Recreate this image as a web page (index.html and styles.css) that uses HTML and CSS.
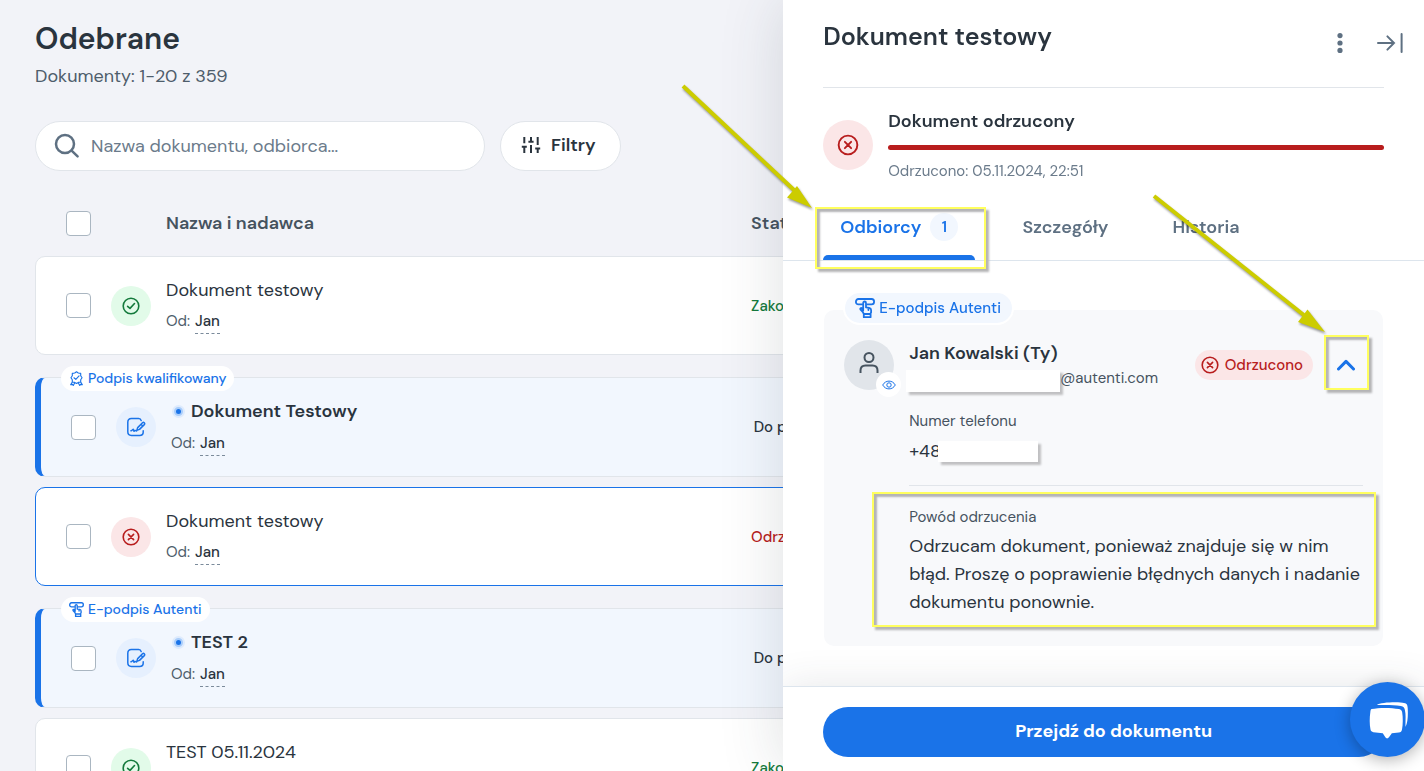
FILE: index.html
```html
<!DOCTYPE html>
<html lang="pl">
<head>
<meta charset="utf-8">
<meta name="viewport" content="width=device-width, initial-scale=1">
<title>Odebrane</title>
<link rel="stylesheet" href="styles.css">
</head>
<body>
<svg class="sprite" aria-hidden="true">
  <symbol id="i-check" viewBox="0 0 20 20"><g stroke-width="1.6"><circle cx="10" cy="10" r="7.800"/><path d="M6.6 10.300 9 12.400 13.500 7.500"/></g></symbol>
  <symbol id="i-cross" viewBox="0 0 20 20"><g stroke-width="1.6"><circle cx="10" cy="10" r="7.800"/><path d="M7.400 7.400l5.200 5.200M12.600 7.400l-5.200 5.200"/></g></symbol>
  <symbol id="i-sign" viewBox="0 0 20 20"><g stroke-width="1.5"><path d="M15.200 3.600C14.800 2.200 14 1.600 12.600 1.600H5.400C3 1.600 1.800 2.800 1.800 5.200v9.600c0 2.400 1.200 3.600 3.600 3.600h8.200c2.400 0 3.600-1.200 3.600-3.200v-1.400"/><path d="M5 13.800c1.200-.4 2-2 2.600-1.200.5.700-.3 1.600.5 1.600.6 0 .7-.8 1.300-.8.5 0 .5.6 1.200.5M10.800 13.400l.9-2.800 4.800-4.800c1.200-1.100 2.900.5 1.800 1.800l-4.800 4.800-2.700 1zM15 7.200l1.800 1.800"/></g></symbol>
  <symbol id="i-touch" viewBox="0 0 20 20"><g stroke-width="1.8"><path d="M7.200 6.400H3.400C1.900 6.400.9 5.400.9 3.900S1.900 1 3.400 1h13.200c1.500 0 2.500 1.300 2.500 2.800s-1 2.600-2.500 2.600h-4.400"/><path d="M8.200 12.400V5c0-2 2.800-2 2.800 0v4.400l3.200.5c1.300.2 1.900.9 1.900 2.100v2.400l-.8 1.600H8.800l-.9-1.800-2.300-2.600c-.9-1.200.5-2.200 1.400-1.400zM8.800 16h6.800v3.200H8.800zM13.400 10v2"/></g></symbol>
  <symbol id="i-badge" viewBox="0 0 20 20"><g stroke-width="1.5"><path d="M10 1l2.400 1.600 3.200.6V6.400L17.400 9l-1.800 2.600v3l-3.200.6L10 16.600l-2.400-1.400-3.200-.6v-3L2.600 9l1.800-2.600V3.200l3.200-.6zM6.600 9l2.500 2.200 4.300-4.600M4.400 14.600l-2.200 3.800 2.600-.5.900 1.500 2-3.600M15.600 14.600l2.200 3.800-2.600-.5-.9 1.500-2-3.600"/></g></symbol>
</svg>

<main class="inbox">
  <h1 class="inbox-title">Odebrane</h1>
  <p class="inbox-count">Dokumenty: 1-20 z 359</p>

  <div class="toolbar">
    <label class="search">
      <svg class="search-icon" viewBox="0 0 26 26" aria-hidden="true"><g stroke-width="2.500"><circle cx="11" cy="11" r="9"/><path d="M17.600 17.600l6 5.800"/></g></svg>
      <input class="search-input" type="search" placeholder="Nazwa dokumentu, odbiorca..." aria-label="Nazwa dokumentu, odbiorca">
    </label>
    <button class="filter" type="button">
      <svg class="filter-icon" viewBox="0 0 20 18" aria-hidden="true"><path d="M3.300 1v6.200M3.300 11v6M.8 10.700h5M10 1v4.500M7.400 5.700h5.200M10 9v8M16.700 1v8M16.700 13v4M14.200 12.500h5"/></svg>
      Filtry
    </button>
  </div>

  <table class="docs">
    <thead>
      <tr class="head-row">
        <th><input class="tick" type="checkbox" aria-label="Zaznacz wszystkie"></th>
        <td></td>
        <th>Nazwa i nadawca</th>
        <th>Status</th>
      </tr>
    </thead>
    <tbody>
      <tr class="doc">
        <td><input class="tick" type="checkbox" aria-label="Dokument testowy"></td>
        <td class="state state-done"><svg class="line-icon"><use href="#i-check"/></svg></td>
        <td><p class="doc-name">Dokument testowy</p><p class="doc-from">Od: <span class="sender">Jan</span></p></td>
        <td class="status status-done">Zakończony</td>
      </tr>
      <tr class="doc unread">
        <td><span class="row-tag"><svg class="line-icon"><use href="#i-badge"/></svg>Podpis kwalifikowany</span><input class="tick" type="checkbox" aria-label="Dokument Testowy"></td>
        <td class="state state-todo"><svg class="line-icon"><use href="#i-sign"/></svg></td>
        <td><p class="doc-name"><span class="dot"></span>Dokument Testowy</p><p class="doc-from">Od: <span class="sender">Jan</span></p></td>
        <td class="status">Do podpisu</td>
      </tr>
      <tr class="doc selected">
        <td><input class="tick" type="checkbox" aria-label="Dokument testowy, odrzucony"></td>
        <td class="state state-rejected"><svg class="line-icon"><use href="#i-cross"/></svg></td>
        <td><p class="doc-name">Dokument testowy</p><p class="doc-from">Od: <span class="sender">Jan</span></p></td>
        <td class="status status-rejected">Odrzucony</td>
      </tr>
      <tr class="doc unread">
        <td><span class="row-tag"><svg class="line-icon"><use href="#i-touch"/></svg>E-podpis Autenti</span><input class="tick" type="checkbox" aria-label="TEST 2"></td>
        <td class="state state-todo"><svg class="line-icon"><use href="#i-sign"/></svg></td>
        <td><p class="doc-name"><span class="dot"></span>TEST 2</p><p class="doc-from">Od: <span class="sender">Jan</span></p></td>
        <td class="status">Do podpisu</td>
      </tr>
      <tr class="doc">
        <td><input class="tick" type="checkbox" aria-label="TEST 05.11.2024"></td>
        <td class="state state-done"><svg class="line-icon"><use href="#i-check"/></svg></td>
        <td><p class="doc-name">TEST 05.11.2024</p></td>
        <td class="status status-done">Zakończony</td>
      </tr>
    </tbody>
  </table>
</main>

<aside class="panel" aria-label="Dokument testowy">
  <header class="panel-head">
    <h2 class="panel-title">Dokument testowy</h2>
    <div class="panel-tools">
      <button class="tool" type="button" aria-label="Więcej"><svg class="tool-more" viewBox="0 0 6 20"><circle cx="3" cy="2.600" r="2.600"/><circle cx="3" cy="10" r="2.600"/><circle cx="3" cy="17.400" r="2.600"/></svg></button>
      <button class="tool" type="button" aria-label="Zamknij panel"><svg class="tool-close" viewBox="0 0 26 20"><path d="M1 10h16M10.400 3.400 17 10l-6.600 6.600M24.600 1v18"/></svg></button>
    </div>
  </header>

  <section class="summary">
    <span class="summary-icon"><svg class="line-icon"><use href="#i-cross"/></svg></span>
    <div class="summary-text">
      <h3 class="summary-title">Dokument odrzucony</h3>
      <div class="summary-bar"></div>
      <p class="summary-date">Odrzucono: 05.11.2024, 22:51</p>
    </div>
  </section>

  <nav class="tabs">
    <button class="tab active" type="button">Odbiorcy <span class="tab-count">1</span><span class="mark mark-tab"></span></button>
    <button class="tab" type="button">Szczegóły</button>
    <button class="tab" type="button">Historia</button>
  </nav>

  <div class="panel-body">
    <article class="card">
      <span class="card-tag"><svg class="line-icon"><use href="#i-touch"/></svg>E-podpis Autenti</span>
      <div class="avatar">
        <svg class="avatar-icon" viewBox="0 0 22 24" aria-hidden="true"><circle cx="11" cy="6.500" r="4.500"/><path d="M2.500 22v-2.500c0-3.500 1.700-5 5-5h7c3.300 0 5 1.500 5 5V22"/></svg>
        <span class="avatar-eye"><svg viewBox="0 0 14 10" aria-hidden="true"><path d="M.7 5C3.600-.2 10.400-.2 13.300 5 10.400 10.200 3.600 10.200.7 5z"/><circle cx="7" cy="5" r="2.200"/></svg></span>
      </div>
      <div class="person">
        <div class="person-id">
          <h3 class="person-name">Jan Kowalski (Ty)</h3>
          <p class="person-mail"><span class="redacted redacted-mail"></span>@autenti.com</p>
        </div>
        <span class="pill"><svg class="line-icon"><use href="#i-cross"/></svg>Odrzucono</span>
        <button class="collapse" type="button" aria-label="Zwiń"><svg viewBox="0 0 18 12"><path d="M1.500 10 9 2.400 16.500 10"/></svg><span class="mark mark-collapse"></span></button>
      </div>
      <div class="details">
        <p class="field-label">Numer telefonu</p>
        <p class="field-value phone">+48<span class="redacted redacted-phone"></span></p>
        <div class="reason">
          <p class="field-label">Powód odrzucenia</p>
          <p class="field-value reason-text">Odrzucam dokument, ponieważ znajduje się w nim błąd. Proszę o poprawienie błędnych danych i nadanie dokumentu ponownie.</p>
          <span class="mark mark-reason"></span>
        </div>
      </div>
    </article>
  </div>

  <footer class="panel-foot">
    <button class="primary" type="button">Przejdź do dokumentu</button>
  </footer>

  <svg class="arrow arrow-tab" viewBox="0 0 132 126" aria-hidden="true"><path class="shaft" d="M2 3 113 107"/><path class="tip" d="M131 125 106 114.500 116 103z"/></svg>
  <svg class="arrow arrow-collapse" viewBox="0 0 174 140" aria-hidden="true"><path class="shaft" d="M2 2 153 122"/><path class="tip" d="M173 138 146 128 155.500 115.500z"/></svg>
</aside>

<button class="chat" type="button" aria-label="Czat">
  <svg viewBox="0 0 40 38"><path d="M3.500 8C11 6.500 23 6.500 31 8c2 .5 3 1.500 3.200 3.500.8 5 .8 12-.2 17-.4 2-1.200 2.800-3.200 3l-7 .8c-1.300 2-2.600 4-3.700 4.700-.8.600-1.200.600-2 0-1-.7-2-2.700-3.300-4.700l-7-.8C4 31.200 2.800 30.200 2.500 28.500c-1-5-1-12-.2-17 .2-2 .3-3 1.200-3.500z"/><path d="M9 4C12 1 32 .600 36 2c3 .5 3.500 2 3.700 5 .4 7 .2 14-2.200 19-.2-7 .6-12-.6-17-.4-2.500-1.500-3.500-4-4-8-1.400-16-1-24-1z"/></svg>
</button>
</body>
</html>
```

FILE: styles.css
```css
* { box-sizing: border-box; }

body {
  margin: 0;
  height: 100vh;
  overflow: hidden;
  background: #f2f3f8;
  color: #2a343e;
  font-family: "DM Sans", Inter, "Open Sans", sans-serif;
  font-size: 18px;
}

h1, h2, h3, p { margin: 0; }
button { font: inherit; color: inherit; cursor: pointer; }
.sprite { display: none; }

.line-icon {
  flex: none;
  width: 20px;
  height: 20px;
  fill: none;
  stroke: currentColor;
  stroke-linecap: round;
  stroke-linejoin: round;
}

/* Inbox */
.inbox { padding: 19px 35px 0; }
.inbox-title { font-size: 30px; font-weight: 600; line-height: 40px; }
.inbox-count { margin-top: 4px; color: #4e5d6b; font-size: 18px; line-height: 26px; }

.toolbar { display: flex; gap: 15px; margin-top: 32px; }
.search {
  display: flex;
  align-items: center;
  gap: 11px;
  width: 450px;
  height: 50px;
  padding: 0 18px;
  background: #fff;
  border: 1px solid #e1e5ea;
  border-radius: 25px;
}
.search-icon { flex: none; width: 26px; height: 26px; fill: none; stroke: #5e7082; stroke-linecap: round; }
.search-input { flex: 1; min-width: 0; padding: 0; border: 0; outline: 0; background: none; font: inherit; }
.search-input::placeholder { color: #6b7b8b; opacity: 1; }
.filter {
  display: flex;
  align-items: center;
  gap: 10px;
  height: 50px;
  padding: 0 24px 2px 20px;
  background: #fff;
  border: 1px solid #e1e5ea;
  border-radius: 25px;
  font-weight: 600;
}
.filter-icon { width: 20px; height: 18px; fill: none; stroke: #2a343e; stroke-width: 2; }

.docs, .docs thead { display: block; }
.docs { margin-top: 20px; }
.docs tbody { display: flex; flex-direction: column; gap: 10px; }
.docs th, .docs td { padding: 0; text-align: left; }
.head-row, .doc {
  display: grid;
  grid-template-columns: 30px 40px minmax(0, 31fr) minmax(0, 33fr);
  column-gap: 15px;
  align-items: center;
  padding: 20px 30px;
  border: 1px solid transparent;
}
.head-row { padding-top: 19px; padding-bottom: 19px; color: #46535f; line-height: 25px; }
.head-row th { font-weight: 600; }
.tick {
  appearance: none;
  display: block;
  width: 25px;
  height: 25px;
  margin: 0;
  background: #fff;
  border: 1px solid #aab6c1;
  border-radius: 4px;
}
.doc {
  position: relative;
  min-height: 99px;
  background: #fff;
  border-color: #e1e5ea;
  border-radius: 10px;
}
.doc:last-child .doc-name { margin-bottom: 31px; }
.selected { border-color: #1a73e8; }
.unread {
  margin-top: 12px;
  background: #f2f7fe;
  border-left: 6px solid #1a73e8;
}
.state {
  display: grid;
  place-items: center;
  width: 40px;
  height: 40px;
  border-radius: 50%;
}
.state-done { background: #e2fbe9; color: #147a3c; }
.state-todo { background: #e6f0fe; color: #1a73e8; }
.state-rejected { background: #fbe6e7; color: #b81d1d; }
.doc-name { line-height: 26px; }
.doc-from { margin-top: 5px; color: #4e5d6b; font-size: 15px; line-height: 26px; }
.unread .doc-name { display: flex; align-items: center; font-weight: 600; }
.unread .doc-from { margin-top: 6px; }
.sender { margin-left: 1px; padding-bottom: 2px; border-bottom: 1px dashed #7b8b9b; color: #2a343e; font-weight: 500; }
.dot { width: 9px; height: 9px; margin: 0 8px 0 3px; border: 2px solid #a9cdfa; border-radius: 50%; background: #1a73e8; box-shadow: 0 0 0 2px #deebfd; }
.status { font-size: 15px; font-weight: 500; }
.status-done { color: #147a3c; }
.status-rejected { color: #b81d1d; }
.row-tag {
  position: absolute;
  top: -12px;
  left: 20px;
  display: flex;
  align-items: center;
  gap: 4px;
  height: 25px;
  padding: 0 8px 1px;
  background: #fff;
  border-radius: 13px;
  color: #1a73e8;
  font-size: 14px;
  font-weight: 500;
}
.row-tag .line-icon { width: 15px; height: 15px; }

/* Side panel */
.panel {
  position: fixed;
  inset: 0 0 0 auto;
  display: flex;
  flex-direction: column;
  width: 45%;
  background: #fff;
  box-shadow: 0 0 60px rgba(50, 60, 70, 0.16);
}
.panel-head {
  display: flex;
  justify-content: space-between;
  margin-left: 40px;
  margin-right: 21px;
  padding-top: 20px;
}
.panel-title { font-size: 25px; font-weight: 600; line-height: 34px; }
.panel-tools { display: flex; align-items: center; gap: 34px; padding-top: 12px; }
.tool { display: grid; padding: 0; border: 0; background: none; }
.tool-more { width: 6px; height: 20px; fill: #5e7082; }
.tool-close { width: 26px; height: 20px; fill: none; stroke: #5e7082; stroke-width: 2; stroke-linecap: round; }

.summary {
  display: flex;
  align-items: flex-start;
  gap: 15px;
  margin: 33px 40px 0;
  padding-top: 21px;
  border-top: 1px solid #e1e5ea;
}
.summary-icon {
  display: grid;
  place-items: center;
  width: 50px;
  height: 50px;
  margin-top: 11px;
  border-radius: 50%;
  background: #fbe6e7;
  color: #b81d1d;
}
.summary-icon .line-icon { width: 24px; height: 24px; }
.summary-text { flex: 1; }
.summary-title { font-size: 18px; font-weight: 600; line-height: 24px; }
.summary-bar { height: 5px; margin: 12px 0 9px; border-radius: 3px; background: #b81d1d; }
.summary-date { color: #6b7b8b; font-size: 15px; line-height: 24px; }

.tabs { display: flex; gap: 30px; height: 67px; margin-top: 11px; padding: 0 40px; border-bottom: 1px solid #dde5ed; }
.tab {
  position: relative;
  display: flex;
  align-items: flex-start;
  gap: 9px;
  padding: 19px 17px 0;
  border: 0;
  background: none;
  color: #5e7082;
  font-weight: 600;
  line-height: 28px;
}
.active { color: #1a73e8; }
.active::after { content: ""; position: absolute; inset: auto 0 0; height: 5px; border-radius: 5px 5px 0 0; background: #1a73e8; }
.tab-count { width: 28px; height: 28px; border-radius: 50%; background: #f2f7fe; font-size: 15px; text-align: center; }

.panel-body { flex: 1; padding: 49px 41px 0; }
.card {
  position: relative;
  display: grid;
  grid-template-columns: 50px 1fr;
  column-gap: 15px;
  padding: 30px 20px;
  border-radius: 10px;
  background: #f8f9fb;
}
.card-tag {
  position: absolute;
  top: -19px;
  left: 19px;
  display: flex;
  align-items: center;
  gap: 4px;
  height: 34px;
  padding: 0 11px 0 10px;
  border: 2px solid #fff;
  border-radius: 17px;
  background: #f2f7fe;
  color: #1a73e8;
  font-size: 15px;
  font-weight: 500;
}
.avatar { position: relative; display: grid; place-items: center; width: 50px; height: 50px; border-radius: 50%; background: #e1e5ea; }
.avatar-icon { width: 22px; height: 24px; margin-bottom: 4px; fill: none; stroke: #46535f; stroke-width: 2; }
.avatar-eye {
  position: absolute;
  right: -7px;
  bottom: -7px;
  display: grid;
  place-items: center;
  width: 25px;
  height: 25px;
  border-radius: 50%;
  background: #fff;
}
.avatar-eye svg { width: 14px; height: 10px; fill: none; stroke: #1a73e8; }
.person { display: flex; align-items: center; }
.person-id { flex: 1; }
.person-name { font-size: 18px; font-weight: 600; line-height: 26px; }
.person-mail { display: flex; align-items: center; color: #46535f; font-size: 15px; line-height: 24px; }
.redacted { background: #fff; box-shadow: 3px 3px 2px #c0c0c2; }
.redacted-mail { width: 154px; height: 22px; margin: 3px 0 -3px -3px; }
.redacted-phone { width: 100px; height: 21px; margin-left: -3px; }
.pill {
  display: flex;
  align-items: center;
  gap: 5px;
  height: 30px;
  padding: 0 10px 1px 5px;
  border-radius: 15px;
  background: #fbe6e7;
  color: #b81d1d;
  font-size: 15px;
  font-weight: 500;
}
.collapse { position: relative; display: grid; place-items: center; width: 50px; height: 50px; margin-left: 8px; margin-right: -8px; padding: 0; border: 0; background: none; }
.collapse svg { width: 18px; height: 12px; fill: none; stroke: #1a73e8; stroke-width: 3; stroke-linecap: round; stroke-linejoin: round; }
.details { grid-column: 2; padding-top: 18px; }
.field-label { color: #46535f; font-size: 15px; line-height: 26px; }
.field-value { line-height: 28px; }
.phone { display: flex; align-items: center; margin-top: 3px; }
.reason { position: relative; margin-top: 20px; padding-top: 18px; border-top: 1px solid #e1e5ea; }
.reason-text { margin-top: 2px; }

.panel-foot {
  padding: 20px 40px 14px;
  border-top: 1px solid #dde5ed;
  background: #fff;
  box-shadow: 0 0 40px rgba(50, 60, 70, 0.12);
  clip-path: inset(-40px 0 0);
}
.primary {
  display: block;
  width: 100%;
  height: 50px;
  padding: 0 0 3px 20px;
  border: 0;
  border-radius: 25px;
  background: #1a73e8;
  color: #fff;
  font-weight: 700;
}

.chat {
  position: fixed;
  right: -1px;
  bottom: 14px;
  display: grid;
  place-items: center;
  width: 75px;
  height: 75px;
  padding: 0;
  border: 0;
  border-radius: 50%;
  background: #1a73e8;
  box-shadow: 0 3px 16px rgba(0, 0, 0, 0.3);
}
.chat svg { width: 40px; height: 38px; fill: #fff; }

/* Callouts */
.mark { position: absolute; border: 2px solid #ffff5e; box-shadow: 3px 3px 2px #b4b4b6, inset 3px 3px 2px #b4b4b6; pointer-events: none; z-index: 2; }
.mark-tab { inset: 13px -11px -9px -8px; }
.mark-collapse { inset: -5px 2px 0 3px; }
.mark-reason { inset: 6px -13px -11px -37px; }
.arrow { position: absolute; overflow: visible; pointer-events: none; filter: drop-shadow(1px 2px 1px rgba(0, 0, 0, 0.4)); }
.arrow-tab { left: -102px; top: 83px; width: 132px; height: 126px; }
.arrow-collapse { right: 98px; top: 194px; width: 174px; height: 140px; }
.shaft { fill: none; stroke: #cccc00; stroke-width: 4; }
.tip { fill: #cccc00; }
```
